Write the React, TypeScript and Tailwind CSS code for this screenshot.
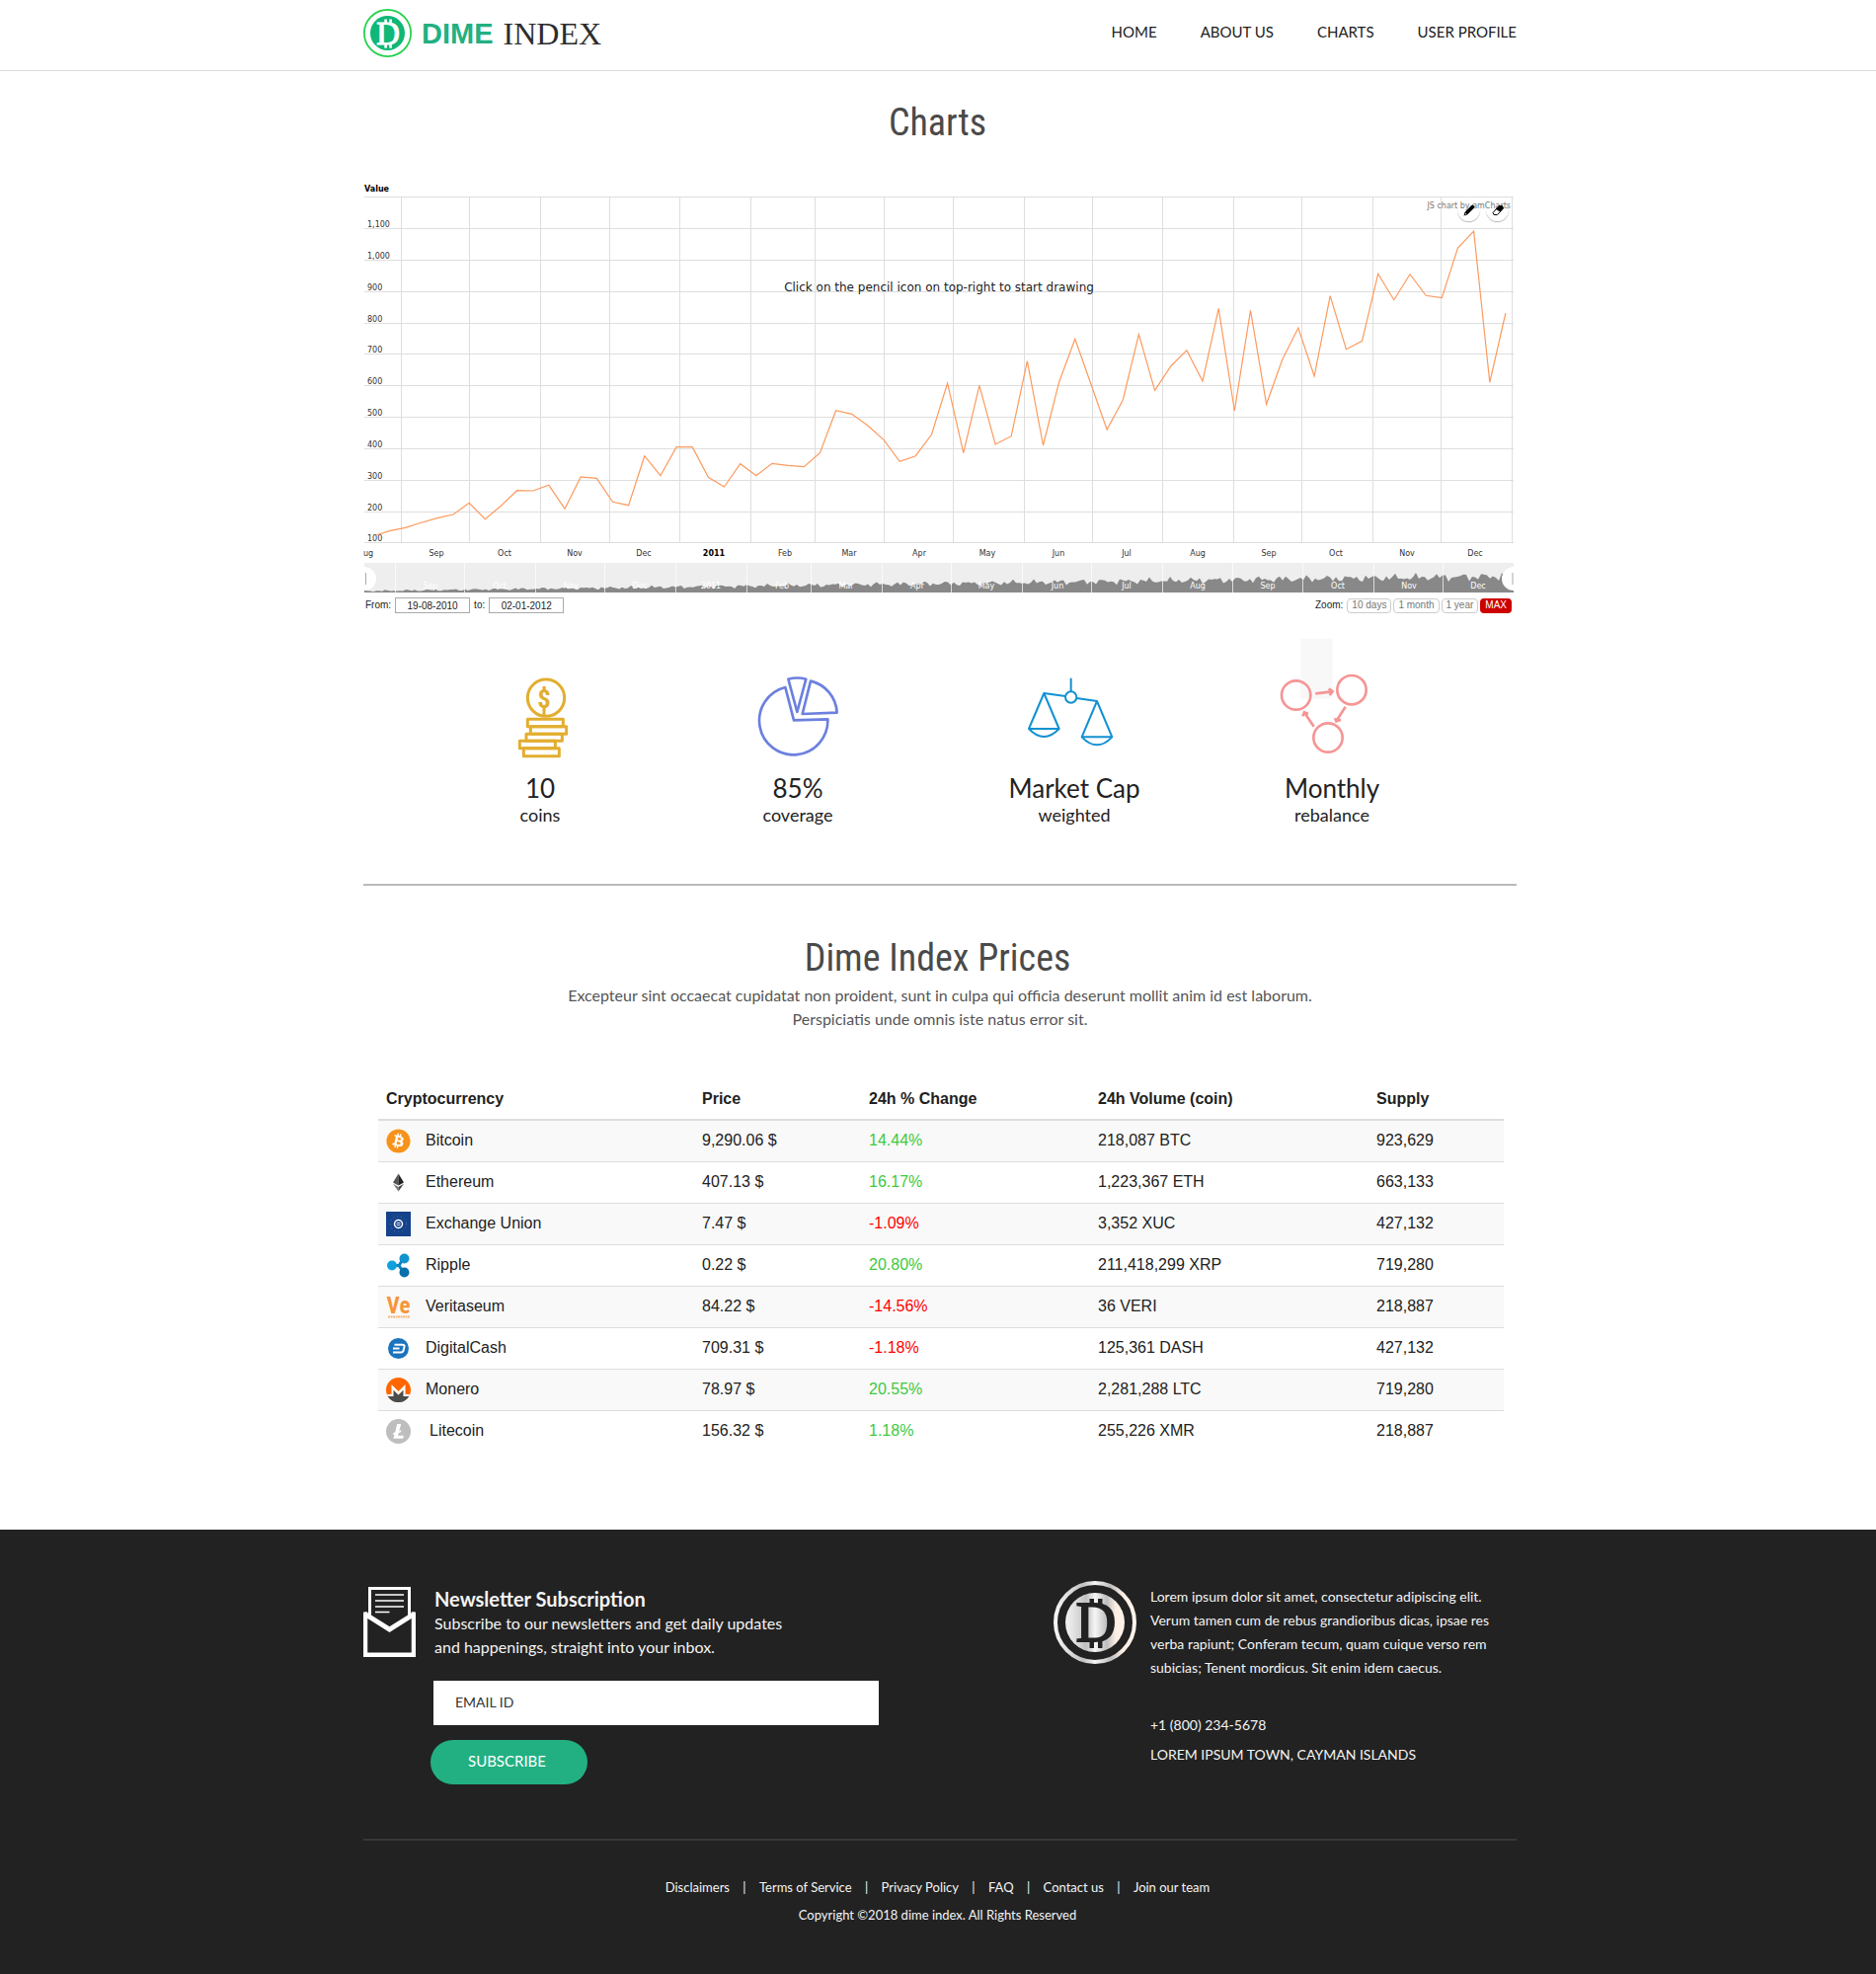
import React from "react";
import { FaBitcoin } from "react-icons/fa";

const NAV = ["HOME", "ABOUT US", "CHARTS", "USER PROFILE"];

const GRID_Y = [15, 47, 79, 111, 143, 174, 206, 238, 270, 302, 334, 365];
const Y_LABELS = ["1,100", "1,000", "900", "800", "700", "600", "500", "400", "300", "200", "100"];
const GRID_X = [38, 107, 179, 249, 320, 392, 457, 527, 597, 669, 738, 809, 881, 950, 1022, 1091, 1163];
const MONTHS = ["Sep", "Oct", "Nov", "Dec", "2011", "Feb", "Mar", "Apr", "May", "Jun", "Jul", "Aug", "Sep", "Oct", "Nov", "Dec"];
const MONTH_X = [74, 143, 214, 284, 355, 427, 492, 563, 632, 704, 773, 845, 917, 985, 1057, 1126];
const SCROLL_X = [32, 102, 174, 244, 316, 388, 453, 525, 595, 667, 737, 809, 880, 951, 1023, 1093];

// Weekly samples, measured downwards from the top of the chart in thirds of a unit.
const SAMPLES = [
  1061, 1051, 1036, 1022, 1011, 976, 1025, 985, 938, 939, 922, 994, 897, 901, 973, 983, 833, 893, 806, 806, 898, 927,
  857, 893, 856, 862, 866, 824, 695, 706, 741, 784, 850, 833, 768, 612, 824, 619, 798, 773, 545, 801, 608, 478, 616,
  753, 663, 464, 634, 561, 512, 606, 385, 696, 391, 676, 540, 444, 591, 347, 509, 484, 280, 359, 281, 346, 353, 201,
  150, 610, 399,
];
const LINE_POINTS =
  "13,358 " + SAMPLES.map((v, i) => `${(26.4 + i * 16.15).toFixed(1)},${(v / 3).toFixed(1)}`).join(" ");

const AREA_POINTS = (() => {
  const pts = ["1,416"];
  for (let i = 0; i <= 388; i++) {
    const t = i / 388;
    const base = 1.5 + 15 * t;
    const wave = Math.sin(i * 1.9) + Math.sin(i * 0.83 + 2) + 0.8 * Math.sin(i * 3.7 + 1);
    pts.push(`${1 + i * 3},${(416 - base - wave * (0.4 + 1.6 * t)).toFixed(1)}`);
  }
  pts.push("1165,416");
  return pts.join(" ");
})();

function Coin({ className, ring, face, mark, ringWidth, children }: {
  className: string; ring: string; face: string; mark: string; ringWidth: number; children?: React.ReactNode;
}) {
  return (
    <svg viewBox="0 0 84 84" className={className} aria-hidden="true">
      {children}
      <circle cx="42" cy="42" r={42 - ringWidth / 2} fill="none" stroke={ring} strokeWidth={ringWidth} />
      <circle cx="42" cy="42" r="30" fill={face} />
      <g fill={mark}>
        <rect x="36.500" y="18" width="4.500" height="7" />
        <rect x="45" y="18" width="4.500" height="7" />
        <rect x="36.500" y="61" width="4.500" height="7" />
        <rect x="45" y="61" width="4.500" height="7" />
        <text x="43" y="61" fontSize="56" textAnchor="middle" stroke={mark} strokeWidth="2" fontFamily="Liberation Serif, serif">D</text>
      </g>
    </svg>
  );
}

function Header() {
  return (
    <header className="border-b border-[#dcdcdc]">
      <div className="mx-auto flex h-[71px] max-w-[1172px] items-start justify-between pl-1">
        <a href="#" className="mt-[9px] flex items-center" aria-label="Dime Index">
          <Coin className="h-[49px] w-[49px]" ring="#22d14b" face="#10b777" mark="#ffffff" ringWidth={3} />
          <span className="ml-2.5 font-['Liberation_Sans',sans-serif] text-[29px] leading-[36px] font-bold text-[#22b082]">DIME</span>
          <span className="ml-2.5 font-['Liberation_Serif',serif] text-[32px] leading-[36px] text-[#2d2d2d]">INDEX</span>
        </a>
        <nav className="mt-[22px] flex gap-[44px] text-[15px] leading-5 text-[#222]">
          {NAV.map((n) => (
            <a key={n} href="#">{n}</a>
          ))}
        </nav>
      </div>
    </header>
  );
}

function Chart() {
  return (
    <div className="relative mt-[36px]">
      <svg viewBox="0 0 1168 418" className="block h-auto w-full" fontFamily="DejaVu Sans, sans-serif" fontSize="8" role="img" aria-label="Value chart">
        <defs>
          <clipPath id="strip"><rect x="1" y="386" width="1164" height="30" /></clipPath>
        </defs>
        <text x="1" y="10" fontWeight="700" fill="#000">Value</text>
        <g stroke="#dedede" shapeRendering="crispEdges">
          {GRID_Y.map((y) => <line key={y} x1="1" x2="1165" y1={y + 0.5} y2={y + 0.5} />)}
          {GRID_X.map((x) => <line key={x} x1={x + 0.5} x2={x + 0.5} y1="15" y2="365" />)}
        </g>
        <g fill="#333">
          {Y_LABELS.map((l, i) => <text key={l} x="4" y={GRID_Y[i + 1] - 1}>{l}</text>)}
          <text x="0" y="379">ug</text>
          {MONTHS.map((m, i) => (
            <text key={i} x={MONTH_X[i]} y="379" textAnchor="middle" fontWeight={m === "2011" ? 700 : 400} fill={m === "2011" ? "#000" : "#333"}>{m}</text>
          ))}
        </g>
        <text x="583" y="111" fontSize="12" textAnchor="middle" fill="#222">Click on the pencil icon on top-right to start drawing</text>
        <text x="1162" y="27" textAnchor="end" fill="#777">JS chart by amCharts</text>
        <polyline points={LINE_POINTS} fill="none" stroke="#fc9a5e" strokeWidth="1.2" />
        <g clipPath="url(#strip)">
          <rect x="1" y="386" width="1164" height="30" fill="#eeeeee" />
          <polygon points={AREA_POINTS} fill="#888888" />
          {SCROLL_X.map((x) => <line key={x} x1={x + 0.5} x2={x + 0.5} y1="386" y2="416" stroke="#fff" strokeOpacity="0.7" />)}
          {MONTHS.map((m, i) => <text key={i} x={SCROLL_X[i] + 36} y="412" textAnchor="middle" fill="#fff">{m}</text>)}
          <circle cx="1" cy="402" r="12" fill="#fff" />
          <circle cx="1165" cy="402" r="12" fill="#fff" />
          <path d="M2.500 396v12M1164 396v12" stroke="#aaa" />
        </g>
      </svg>
      <div className="absolute top-[17px] right-[8px] flex gap-[6px]">
        <button type="button" aria-label="Draw" className="flex size-[23px] items-center justify-center rounded-full shadow-[0_1px_1px_#bbb]">
          <svg viewBox="0 0 12 12" className="size-3"><path d="M0.500 11.500 1.500 8 8 1.200 9.500 0.300 11.500 2.300 10.800 3.800 4 10.500Z" fill="#000" /><path d="M2.200 8.700 3.300 9.800 1.600 10.400Z" fill="#fff" /></svg>
        </button>
        <button type="button" aria-label="Erase" className="flex size-[23px] items-center justify-center rounded-full shadow-[0_1px_1px_#bbb]">
          <svg viewBox="0 0 12 12" className="size-3"><path d="M1 8.500 7 1.500H10.500L11.500 4 5.500 10.500H2Z" fill="#fff" stroke="#000" /><path d="M4 5 7 1.500H10.500L11.500 4 8.300 7.600Z" fill="#000" /></svg>
        </button>
      </div>
    </div>
  );
}

function DateField({ id, label, value }: { id: string; label: string; value: string }) {
  return (
    <>
      <label htmlFor={id}>{label}</label>
      <input id={id} defaultValue={value} className="mx-[4px] h-4 w-[76px] border border-[#aaa] bg-white text-center" />
    </>
  );
}

function ChartControls() {
  return (
    <div className="mt-[3px] flex h-4 items-center justify-between pr-[5px] pl-[2px] font-['Liberation_Sans',sans-serif] text-[10px] leading-3 text-[#222]">
      <div className="flex items-center">
        <DateField id="from" label="From:" value="19-08-2010" />
        <DateField id="to" label="to:" value="02-01-2012" />
      </div>
      <div className="flex items-center gap-[2px]">
        <span className="mr-[2px]">Zoom:</span>
        {["10 days", "1 month", "1 year"].map((z) => (
          <button key={z} type="button" className="h-[15px] rounded border border-[#ccc] px-1 text-[#777]">{z}</button>
        ))}
        <button type="button" className="h-[15px] rounded bg-[#cc0000] px-[5px] text-white">MAX</button>
      </div>
    </div>
  );
}

function CoinsIcon() {
  const stack = [[163, 265, 108, 22], [172, 287, 109, 23], [159, 310, 109, 21], [139, 331, 108, 22], [151, 353, 108, 24]];
  return (
    <svg viewBox="57 135 288 252" className="h-[84px] w-24" fill="none" stroke="#e2ae30" strokeWidth="9" strokeLinejoin="round">
      <circle cx="219" cy="200" r="56" />
      <path d="M213 165v12M213 232v26" />
      <text x="213" y="232" fontSize="80" fontWeight="700" textAnchor="middle" stroke="none" fill="#e2ae30" fontFamily="Roboto Condensed, Liberation Sans, sans-serif">$</text>
      {stack.map(([x, y, w, h]) => <rect key={y} x={x} y={y} width={w} height={h} />)}
    </svg>
  );
}

function PieIcon() {
  return (
    <svg viewBox="840 135 288 252" className="h-[84px] w-24 overflow-visible" fill="none" stroke="#6c80de" strokeWidth="8" strokeLinejoin="round">
      <path d="M946 168A104 104 0 1 0 1075 265L972 268Z" />
      <path d="M955 143Q982 136 1009 143L982 243Z" />
      <path d="M1023 149A104 104 0 0 1 1103 245L998 249Z" />
    </svg>
  );
}

function ScalesIcon() {
  return (
    <svg viewBox="180 135 288 252" className="h-[84px] w-24" fill="none" stroke="#1191d2" strokeWidth="6" strokeLinejoin="round">
      <path d="M314 140V180M232 186 297 195M331 201 393 210" />
      <circle cx="314" cy="198" r="17" />
      <path d="M232 186 186 294H278ZM186 294Q232 342 278 294" />
      <path d="M393 210 347 319H439ZM347 319Q393 367 439 319" />
    </svg>
  );
}

function CycleIcon() {
  return (
    <svg viewBox="966 135 288 252" className="h-[84px] w-24 overflow-visible" fill="none" stroke="#f69595" strokeWidth="8">
      <rect x="1015" y="20" width="97" height="183" fill="#f8f8f8" stroke="none" />
      <circle cx="1001" cy="192" r="44" />
      <circle cx="1170" cy="176" r="44" />
      <circle cx="1098" cy="321" r="44" />
      <path d="M1060 187 1110 181M1100 172 1112 181 1103 192" />
      <path d="M1151 227 1125 268M1119 262 1123 271 1137 267" />
      <path d="M1055 287 1027 246M1021 256 1026 244 1038 249" />
    </svg>
  );
}

const STATS = [
  { icon: <CoinsIcon />, title: "10", sub: "coins" },
  { icon: <PieIcon />, title: "85%", sub: "coverage" },
  { icon: <ScalesIcon />, title: "Market Cap", sub: "weighted" },
  { icon: <CycleIcon />, title: "Monthly", sub: "rebalance" },
];

function Stats() {
  return (
    <div className="mt-16 grid grid-cols-[242fr_280fr_280fr_242fr] pr-[66px] pl-[58px]">
      {STATS.map((s) => (
        <div key={s.title} className="flex flex-col items-center text-[#222]">
          {s.icon}
          <p className="mt-[13px] text-[26px] leading-8">{s.title}</p>
          <p className="text-lg leading-[22px]">{s.sub}</p>
        </div>
      ))}
    </div>
  );
}

const ICON = "size-[25px] shrink-0";
const ICONS: Record<string, React.ReactNode> = {
  Bitcoin: (
    <span className="rounded-full bg-white"><FaBitcoin className="size-[25px] text-[#f7931a]" /></span>
  ),
  Ethereum: (
    <svg viewBox="0 0 25 25" className={ICON}>
      <path d="M12.500 3.500 7 12.500 12.500 15.500Z" fill="#555" /><path d="M12.500 3.500 18 12.500 12.500 15.500Z" fill="#222" />
      <path d="M7 13.800 12.500 17v4.500Z" fill="#777" /><path d="M18 13.800 12.500 17v4.500Z" fill="#444" />
    </svg>
  ),
  "Exchange Union": (
    <svg viewBox="0 0 25 25" className={ICON}>
      <rect width="25" height="25" fill="#15428b" />
      <circle cx="12.500" cy="12.500" r="8" fill="none" stroke="#4f77b5" strokeDasharray="1 3" />
      <circle cx="12.500" cy="12.500" r="4" fill="none" stroke="#fff" strokeWidth="1.500" />
      <path d="M10.500 11.500h4M10.500 13.500h4" stroke="#dfe8f5" />
    </svg>
  ),
  Ripple: (
    <svg viewBox="0 0 25 25" className={ICON}>
      <path d="M6 12.500h7L18 5M13 12.500 18 20" stroke="#0a86c2" strokeWidth="3" fill="none" />
      <circle cx="18.500" cy="5.500" r="5" fill="#1193cf" /><circle cx="6" cy="12.500" r="5" fill="#12a0dc" /><circle cx="18.500" cy="19.500" r="5" fill="#0b6fab" />
    </svg>
  ),
  Veritaseum: (
    <svg viewBox="0 0 25 25" className={`${ICON} overflow-visible`}>
      <text x="12.500" y="19" fontSize="23" fontWeight="700" textAnchor="middle" fill="#f7953a" fontFamily="Roboto Condensed, Liberation Sans, sans-serif">Ve</text>
      <path d="M2 22.500H24" stroke="#f9b87c" strokeWidth="2" strokeDasharray="2 .5" />
    </svg>
  ),
  DigitalCash: (
    <svg viewBox="0 0 25 25" className={ICON}>
      <circle cx="12.500" cy="12.500" r="10.500" fill="#1c75bc" />
      <path d="M8.500 8.800h8q2.500 0 2 2l-.9 3.600q-.5 2-2.600 2H7M7 12.500h6.500" stroke="#fff" strokeWidth="2" fill="none" />
    </svg>
  ),
  Monero: (
    <svg viewBox="0 0 25 25" className={ICON}>
      <circle cx="12.500" cy="12.500" r="12.500" fill="#ff6600" />
      <path d="M1.500 18.500H7V12L12.500 17.500 18 12V18.500H23.500A12.500 12.500 0 0 1 1.500 18.500Z" fill="#4c4c4c" />
      <path d="M1 17H5.500V7L12.500 14 19.500 7V17H24L23.300 19H17.500V12.500L12.500 17.500 7.500 12.500V19H1.700Z" fill="#fff" />
    </svg>
  ),
  Litecoin: (
    <svg viewBox="0 0 25 25" className={ICON}>
      <circle cx="12.500" cy="12.500" r="12.500" fill="#bebebe" />
      <path d="M11.200 5h4L13.300 12l2.200-.9-.6 2.200-2.200.9-.7 2.600h6l-.8 3H7.300L8.600 15.400l-1.700.7.600-2.200 1.700-.7Z" fill="#fff" />
    </svg>
  ),
};

const ROWS = [
  ["Bitcoin", "9,290.06 $", "14.44%", "218,087 BTC", "923,629"],
  ["Ethereum", "407.13 $", "16.17%", "1,223,367 ETH", "663,133"],
  ["Exchange Union", "7.47 $", "-1.09%", "3,352 XUC", "427,132"],
  ["Ripple", "0.22 $", "20.80%", "211,418,299 XRP", "719,280"],
  ["Veritaseum", "84.22 $", "-14.56%", "36 VERI", "218,887"],
  ["DigitalCash", "709.31 $", "-1.18%", "125,361 DASH", "427,132"],
  ["Monero", "78.97 $", "20.55%", "2,281,288 LTC", "719,280"],
  ["Litecoin", "156.32 $", "1.18%", "255,226 XMR", "218,887"],
];

function PriceTable() {
  return (
    <div className="mt-12 pr-[13px] pl-[15px]">
      <table className="w-full table-fixed border-collapse text-left font-['Liberation_Sans',sans-serif] text-base leading-6 text-[#212121]">
        <colgroup>
          <col className="w-[320px]" /><col className="w-[169px]" /><col className="w-[232px]" /><col className="w-[282px]" /><col className="w-[137px]" />
        </colgroup>
        <thead>
          <tr className="h-[42px] border-b-2 border-[#dddddd]">
            {["Cryptocurrency", "Price", "24h % Change", "24h Volume (coin)", "Supply"].map((h) => (
              <th key={h} scope="col" className="px-2 font-bold">{h}</th>
            ))}
          </tr>
        </thead>
        <tbody>
          {ROWS.map(([name, price, change, volume, supply]) => (
            <tr key={name} className="h-[42px] border-[#dddddd] not-last:border-b odd:bg-[#f9f9f9]">
              <td className="px-2">
                <div className="flex items-center gap-[15px]">
                  {ICONS[name]}
                  <span className={name === "Litecoin" ? "pl-1" : ""}>{name}</span>
                </div>
              </td>
              <td className="px-2">{price}</td>
              <td className={change.startsWith("-") ? "px-2 text-[#ff0000]" : "px-2 text-[#3ec93e]"}>{change}</td>
              <td className="px-2">{volume}</td>
              <td className="px-2">{supply}</td>
            </tr>
          ))}
        </tbody>
      </table>
    </div>
  );
}

function Newsletter() {
  return (
    <form className="flex items-start gap-[18px]" onSubmit={(e) => e.preventDefault()}>
      <svg viewBox="0 0 53 71" className="mt-[6px] h-[71px] w-[53px]" fill="none" stroke="#fff" aria-hidden="true">
        <path d="M6.500 30V1.500H46.500V30" strokeWidth="3" />
        <path d="M12 8H41M12 14H41M12 20H41M12 25.500H26.500" strokeWidth="1.500" />
        <path d="M2 25.500V68.700H51V25.500" strokeWidth="4.500" />
        <path d="M1 27 26.500 43 52 27" strokeWidth="5" />
      </svg>
      <div className="flex flex-col items-start">
        <h3 className="mt-[6px] pl-px text-xl leading-6 font-bold">Newsletter Subscription</h3>
        <p className="mt-px pl-px text-base leading-6">
          Subscribe to our newsletters and get daily updates<br />and happenings, straight into your inbox.
        </p>
        <input type="email" aria-label="Email ID" placeholder="EMAIL ID" className="mt-[22px] h-[45px] w-[451px] bg-white px-[22px] pb-[3px] text-sm text-[#333] placeholder:text-[#333]" />
        <button type="submit" className="mt-[15px] -ml-[3px] h-[45px] w-[159px] rounded-full bg-[#22b082] pr-1 pb-0.5 text-[15px] text-white">SUBSCRIBE</button>
      </div>
    </form>
  );
}

function Footer() {
  return (
    <footer className="bg-[#222222] text-[#f4f4f4]">
      <div className="mx-auto max-w-[1172px] pt-[52px] pb-[46px] pl-1">
        <div className="flex items-start justify-between">
          <Newsletter />
          <div className="flex w-[469px] items-start gap-[14px]">
            <Coin className="h-[84px] w-[84px] shrink-0" ring="url(#silver)" face="url(#silver)" mark="#222222" ringWidth={4}>
              <linearGradient id="silver">
                <stop offset="0" stopColor="#f4f4f4" /><stop offset=".25" stopColor="#d2d2d2" /><stop offset=".35" stopColor="#c0c0c0" />
                <stop offset=".5" stopColor="#f6f6f6" /><stop offset=".7" stopColor="#bdbdbd" /><stop offset=".85" stopColor="#fbeee4" /><stop offset="1" stopColor="#fff4ea" />
              </linearGradient>
            </Coin>
            <div>
              <p className="mt-[4px] text-sm leading-6">
                Lorem ipsum dolor sit amet, consectetur adipiscing elit.<br />Verum tamen cum de rebus grandioribus dicas, ipsae res<br />verba rapiunt; Conferam tecum, quam cuique verso rem<br />subicias; Tenent mordicus. Sit enim idem caecus.
              </p>
              <div className="mt-[31px] text-sm leading-[30px]">
                <p>+1 (800) 234-5678</p>
                <p>LOREM IPSUM TOWN, CAYMAN ISLANDS</p>
              </div>
            </div>
          </div>
        </div>
        <hr className="mt-[55px] border-t-2 border-[#383838]" />
        <div className="mt-[33px] flex flex-col items-center pr-[5px] text-[13px] leading-7">
          <nav className="flex items-center">
            {["Disclaimers", "Terms of Service", "Privacy Policy", "FAQ", "Contact us", "Join our team"].map((l, i) => (
              <React.Fragment key={l}>
                {i > 0 && <span className="w-[30px] text-center">|</span>}
                <a href="#">{l}</a>
              </React.Fragment>
            ))}
          </nav>
          <p>Copyright ©2018 dime index. All Rights Reserved</p>
        </div>
      </div>
    </footer>
  );
}

const TITLE = "pr-[5px] text-center font-['Roboto_Condensed','Liberation_Sans_Narrow',sans-serif] text-[38px] leading-[48px] text-[#4a4a4a]";

export default function App() {
  return (
    <div className="min-h-screen bg-white font-['Lato',sans-serif]">
      <Header />
      <main className="mx-auto max-w-[1172px] pb-[79px] pl-1">
        <h1 className={`mt-[28px] font-normal ${TITLE}`}>Charts</h1>
        <Chart />
        <ChartControls />
        <Stats />
        <hr className="mt-[59px] border-t-2 border-[#bababa]" />
        <h2 className={`mt-[49px] font-normal ${TITLE}`}>Dime Index Prices</h2>
        <p className="mt-[2px] text-center text-base leading-6 text-[#555]">
          Excepteur sint occaecat cupidatat non proident, sunt in culpa qui officia deserunt mollit anim id est laborum.<br />Perspiciatis unde omnis iste natus error sit.
        </p>
        <PriceTable />
      </main>
      <Footer />
    </div>
  );
}
